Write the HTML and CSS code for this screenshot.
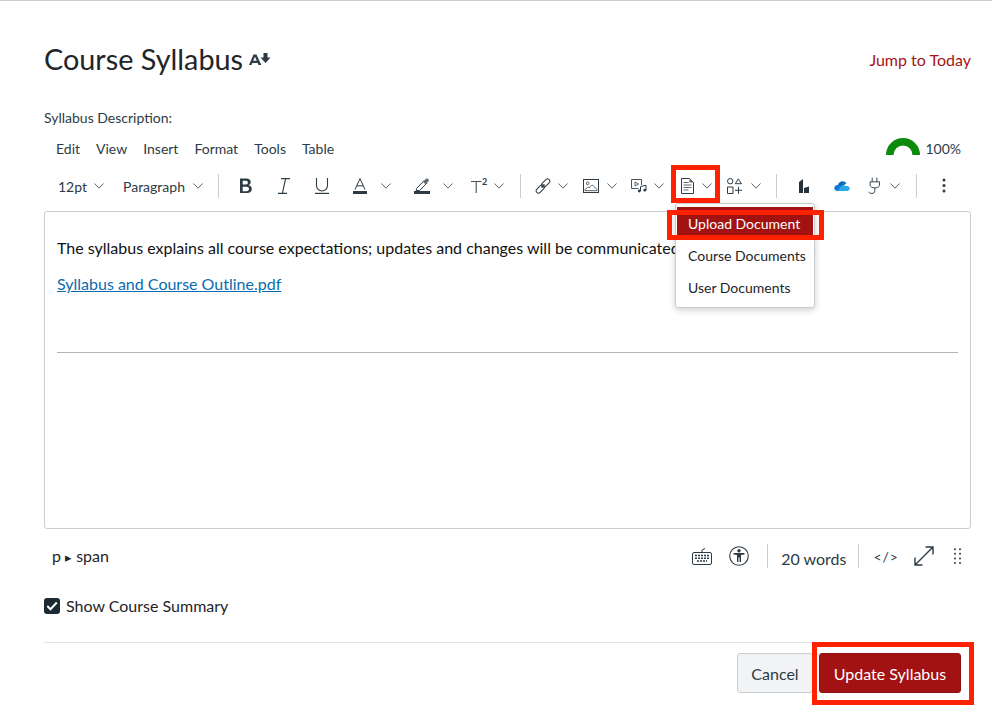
FILE: index.html
```html
<!DOCTYPE html>
<html lang="en">
<head>
<meta charset="utf-8">
<title>Course Syllabus</title>
<link rel="stylesheet" href="styles.css">
</head>
<body>
<svg class="defs" width="0" height="0" aria-hidden="true">
  <symbol id="chev" viewBox="0 0 10 6"><path d="M.5.5 5 5.200 9.500.5" fill="none" stroke="#5b6770" stroke-width="1"/></symbol>
</svg>
<main class="page">
  <header class="head">
    <div class="title-wrap">
      <h1 class="title">Course Syllabus</h1>
      <svg class="a11y-sort" width="22" height="12" viewBox="0 0 22 12"><path d="M4.500 1.500h3L12.300 12H9.500l-.8-2H3.300l-.8 2H0zM4.200 7.800h3.600L6 3.800z" fill="#2d3b45"/><path d="M14.500 0h4v4.500H21.500L16.500 10l-5-5.500h3z" fill="#2d3b45"/></svg>
    </div>
    <a class="jump" href="#">Jump to Today</a>
  </header>
  <div class="label">Syllabus Description:</div>
  <div class="menubar">
    <nav class="menus"><span>Edit</span><span>View</span><span>Insert</span><span>Format</span><span>Tools</span><span>Table</span></nav>
    <div class="score">
      <svg width="36" height="18" viewBox="0 0 36 18"><path d="M4.750 18a13.250 13.250 0 0 1 26.500 0" fill="none" stroke="#0b8a0b" stroke-width="7.500"/></svg>
      <span>100%</span>
    </div>
  </div>
  <div class="toolbar">
    <button class="tb t-size"><span>12pt</span><svg class="chev"><use href="#chev"/></svg></button>
    <button class="tb t-para"><span>Paragraph</span><svg class="chev"><use href="#chev"/></svg></button>
    <i class="sep"></i>
    <button class="tb t-bold"><svg width="14" height="16" viewBox="0 0 14 16"><path d="M1 .5h6.300c2.800 0 4.400 1.400 4.400 3.600 0 1.500-.8 2.600-2 3.100 1.800.4 3.100 1.700 3.100 3.700 0 2.600-1.900 4.100-4.700 4.100H1zM3.700 2.800v3.700h3.200c1.200 0 2-.7 2-1.900 0-1.100-.8-1.800-2-1.800zM3.700 8.800v4.400h3.800c1.500 0 2.500-.8 2.500-2.200 0-1.400-1-2.200-2.500-2.200z" fill="#2d3b45"/></svg></button>
    <button class="tb t-ital"><svg width="12" height="16" viewBox="0 0 12 16"><path d="M3 .6h9M0 15.400h9M7.600.6 4.400 15.400" fill="none" stroke="#2d3b45" stroke-width="1.100"/></svg></button>
    <button class="tb t-under"><svg width="14" height="16" viewBox="0 0 14 16"><path d="M1.500 0v7.500a5.500 5.500 0 0 0 11 0V0" fill="none" stroke="#2d3b45" stroke-width="1.100"/><path d="M0 15.400h14" stroke="#2d3b45" stroke-width="1.200"/></svg></button>
    <button class="tb t-color"><svg width="14" height="16" viewBox="0 0 14 16"><path d="M2 11.500 7 .6l5 10.900M3.700 7.800h6.600" fill="none" stroke="#2d3b45" stroke-width="1"/><path d="M0 13h14v3H0z" fill="#2d3b45"/></svg><svg class="chev"><use href="#chev"/></svg></button>
    <button class="tb t-mark"><svg width="16" height="16" viewBox="0 0 16 16"><path d="M2.500 10.500 10 2.800l2.600 2.600-7 7.100H2.200z" fill="none" stroke="#2d3b45"/><path d="M9 3.800 12 .7c.6-.4 1.300-.4 1.800 0l.8.9c.4.6.4 1.200 0 1.700l-3 3z" fill="#5f6b74"/><path d="M0 13h16v3H0z" fill="#2d3b45"/></svg><svg class="chev"><use href="#chev"/></svg></button>
    <button class="tb t-sup"><svg class="supicon" width="16" height="15" viewBox="0 0 16 15"><path d="M0 3.500h10.500M5.200 3.500V15" fill="none" stroke="#46535c" stroke-width="1.100"/><text x="11" y="7" class="sup">2</text></svg><svg class="chev"><use href="#chev"/></svg></button>
    <i class="sep"></i>
    <button class="tb t-link"><svg width="16" height="16" viewBox="0 0 16 16"><g fill="none" stroke="#2d3b45" stroke-width="1"><rect x="6" y="2.700" width="9.500" height="4.600" rx="2.300" transform="rotate(-45 10.750 5)"/><rect x=".5" y="8.700" width="9.500" height="4.600" rx="2.300" transform="rotate(-45 5.250 11)"/><path d="m6.500 9.500 3-3" stroke-width="1.600"/></g></svg><svg class="chev"><use href="#chev"/></svg></button>
    <button class="tb t-image"><svg width="16" height="14" viewBox="0 0 16 14"><rect x=".5" y=".5" width="15" height="13" fill="none" stroke="#2d3b45"/><circle cx="4.600" cy="4.300" r="1.300" fill="none" stroke="#2d3b45" stroke-width=".8"/><path d="M2 10.500c2-2.200 3-2.700 4.500-1.700 1.500-2.700 3-3 4-1.700l3.500 3.400v1.200H2z" fill="none" stroke="#2d3b45" stroke-width=".8"/></svg><svg class="chev"><use href="#chev"/></svg></button>
    <button class="tb t-media"><svg width="16" height="14" viewBox="0 0 16 14"><path d="M7.500 9.500H.5V.5h10V6" fill="none" stroke="#46535c"/><path d="M4 3v4l3.500-2z" fill="none" stroke="#46535c" stroke-width=".9"/><path d="M9.500 12V7.500l5.500-1.200V11" fill="none" stroke="#2d3b45"/><circle cx="8.300" cy="12" r="1.400" fill="#2d3b45"/><circle cx="13.800" cy="11.200" r="1.400" fill="#2d3b45"/></svg><svg class="chev"><use href="#chev"/></svg></button>
    <button class="tb t-doc"><svg width="13" height="16" viewBox="0 0 13 16"><path d="M.5.5h8l4 4v11H.5z" fill="none" stroke="#2d3b45"/><path d="M2.500 4.500h5M2.500 7h8M2.500 9.500h8M2.500 12h5" stroke="#5f6b74" stroke-width="1.200"/><path d="M8.500.5v4h4z" fill="#5f6b74"/></svg><svg class="chev"><use href="#chev"/></svg></button>
    <button class="tb t-shape"><svg width="15" height="16" viewBox="0 0 15 16"><g fill="none" stroke="#2d3b45"><circle cx="3.200" cy="3.200" r="2.700"/><path d="M8.300 5.700 11.300.9l3.100 4.800zM.5 9h5.500v6.500H.5zM8 12.300h7M11.500 8.800v7"/></g></svg><svg class="chev"><use href="#chev"/></svg></button>
    <i class="sep"></i>
    <button class="tb t-lti"><svg width="10" height="14" viewBox="0 0 10 14"><path d="M0 3 4 0v14H0zM5 9l5-1.500V14H5z" fill="#26333c"/></svg></button>
    <button class="tb t-drive"><svg width="16" height="10" viewBox="0 0 17 11"><path d="M4 4.500C4.700 1.700 7 0 9.500.2c1.700.1 3 1 3.800 2.400L7 7.500z" fill="#0f6cbd"/><path d="M3.800 11C1.700 11 0 9.600 0 7.600 0 5.700 1.700 4.300 3.700 4.300c1 0 2.100.4 3 1.100l2.300 2z" fill="#0f78d4"/><path d="M3.800 11h10.300c1.600 0 2.900-1.200 2.900-2.700S15.700 5.500 14 5.500h-1l-3.700-1L6 7.500z" fill="#28a8ea"/></svg></button>
    <button class="tb t-plug"><svg width="14" height="18" viewBox="0 0 15 19"><g fill="none" stroke="#2d3b45"><path d="M4.500.5v4.500M9.500.5v4.500M2.300 5h10v3.500c0 1.800-2 3-5 3s-5-1.200-5-3zM7.300 11.500v3c0 2-1.200 3-3 3s-3.300-.8-3.800-1.500"/></g></svg><svg class="chev"><use href="#chev"/></svg></button>
    <i class="sep"></i>
    <button class="tb t-more"><svg width="4" height="15" viewBox="0 0 4 15"><circle cx="2" cy="2" r="1.500" fill="#2d3b45"/><circle cx="2" cy="7.500" r="1.500" fill="#2d3b45"/><circle cx="2" cy="13" r="1.500" fill="#2d3b45"/></svg></button>
  </div>
  <section class="editor">
    <p class="copy">The syllabus explains all course expectations; updates and changes will be communicated in class via Canvas.</p>
    <p class="file"><a href="#">Syllabus and Course Outline.pdf</a></p>
    <hr class="rule">
  </section>
  <div class="status">
    <div class="path">p <b>▸</b> span</div>
    <div class="status-tools">
      <svg class="kbd" width="20" height="18" viewBox="0 0 20 18"><path d="M10 5V3l3-1.500" fill="none" stroke="#2d3b45"/><rect x=".5" y="5.500" width="19" height="12" rx="1.500" fill="none" stroke="#2d3b45"/><path d="M3 8.500h14M3 11.200h14M5 14h10" stroke="#2d3b45" stroke-width="1.600" stroke-dasharray="2 1"/></svg>
      <svg class="acc" width="20" height="20" viewBox="0 0 20 20"><circle cx="10" cy="10" r="9.300" fill="none" stroke="#2d3b45" stroke-width="1.100"/><circle cx="10" cy="4.800" r="1.700" fill="#2d3b45"/><path d="M4.500 7h11v1.500l-3.500.6V16h-1.400v-4.500H9.400V16H8V9.100l-3.500-.6z" fill="#2d3b45"/></svg>
      <i class="vr vr-a"></i>
      <span class="words">20 words</span>
      <i class="vr vr-b"></i>
      <span class="code">&lt;/&gt;</span>
      <svg class="expand" width="20" height="20" viewBox="0 0 20 20"><path d="M1 19 19 1M11.500 1H19v7.500M1 11.500V19h7.500" fill="none" stroke="#2d3b45" stroke-width="1.400"/></svg>
      <svg class="grip" width="7" height="16" viewBox="0 0 7 16"><g fill="#2d3b45"><circle cx="1" cy="1.200" r="1"/><circle cx="6" cy="1.200" r="1"/><circle cx="1" cy="5.800" r="1"/><circle cx="6" cy="5.800" r="1"/><circle cx="1" cy="10.400" r="1"/><circle cx="6" cy="10.400" r="1"/><circle cx="1" cy="15" r="1"/><circle cx="6" cy="15" r="1"/></g></svg>
    </div>
  </div>
  <div class="summary">
    <span class="check"><svg width="12" height="10" viewBox="0 0 12 10"><path d="M1.300 5 4.500 8.200 10.800 1.500" fill="none" stroke="#fff" stroke-width="2"/></svg></span>
    <span>Show Course Summary</span>
  </div>
  <footer class="actions">
    <button class="btn cancel">Cancel</button>
    <button class="btn primary">Update Syllabus</button>
  </footer>

  <ul class="dropdown">
    <li class="active">Upload Document</li>
    <li>Course Documents</li>
    <li>User Documents</li>
  </ul>
  <i class="mark mark-doc"></i>
  <i class="mark mark-upload"></i>
  <i class="mark mark-update"></i>
</main>
</body>
</html>
```
FILE: styles.css
```css
* { box-sizing: border-box; }
html, body { margin: 0; padding: 0; background: #fff; }
body { font-family: Lato, "Open Sans", sans-serif; color: #2d3b45; width: 992px; height: 725px; overflow: hidden; }
.defs { position: absolute; }
.page { position: relative; height: 725px; border-top: 1px solid #c7cdd1; padding: 0 21px 0 44px; }

.head { display: flex; justify-content: space-between; align-items: center; height: 60px; margin-top: 28px; }
.title-wrap { display: flex; align-items: center; gap: 6px; }
.title { margin: 0; font-size: 28.800px; font-weight: 400; color: #1f2529; line-height: 60px; }
.jump { font-size: 16px; color: #a61414; text-decoration: none; }

.label { font-size: 14px; line-height: 20px; color: #2d3b45; margin-top: 19px; }

.menubar { display: flex; justify-content: space-between; align-items: flex-end; height: 30px; margin-top: 1px; }
.menus { display: flex; gap: 16px; padding: 0 0 1px 12px; font-size: 14px; line-height: 18px; }
.score { display: flex; align-items: center; gap: 4px; padding-right: 10px; font-size: 14px; color: #2d3b45; }
.score svg { display: block; margin-bottom: 4px; }

.toolbar { display: flex; align-items: center; height: 37px; margin-top: 8px; padding-left: 14px; }
.tb { display: flex; align-items: center; height: 30px; padding: 0; border: 0; background: none; font: inherit; font-size: 14px; color: #2d3b45; flex: none; }
.tb span { margin-top: 2px; }
.tb svg { flex: none; }
.chev { width: 10px; height: 6px; }
.sep { display: block; width: 1px; height: 24px; background: #c7cdd1; flex: none; }
.t-size { width: 65px; gap: 7px; }
.t-para { width: 95px; gap: 8px; }
.t-bold { width: 59px; padding-left: 20px; }
.t-ital { width: 37px; }
.t-under { width: 38px; }
.t-color { width: 61px; gap: 14px; }
.t-mark { width: 57px; gap: 13px; }
.t-sup { width: 49px; gap: 7px; }
.t-link { width: 62px; padding-left: 14px; gap: 7px; }
.t-image { width: 48px; gap: 8px; }
.t-media { width: 50px; gap: 7px; }
.t-doc { width: 46px; gap: 8px; }
.t-shape { width: 49px; gap: 9px; }
.t-lti { width: 57px; padding-left: 22px; }
.t-drive { width: 34px; }
.t-plug { width: 48px; gap: 8px; }
.t-more { width: 40px; padding-left: 25px; }
.supicon { overflow: visible; }
.sup { font-family: Lato, sans-serif; font-size: 9px; font-weight: 700; fill: #2d3b45; }

.editor { height: 318px; margin-top: 7px; border: 1px solid #c7cdd1; border-radius: 3px; padding: 0 12px; color: #111; }
.copy { margin: 26px 0 0; font-size: 16px; line-height: 20px; white-space: nowrap; }
.file { margin: 16px 0 0; font-size: 16px; line-height: 20px; }
.file a { color: #0b6bae; }
.rule { margin: 58px 0 0; border: 0; border-top: 1px solid #b0b5b8; }

.status { display: flex; justify-content: space-between; align-items: center; height: 48px; margin-top: 3px; }
.path { padding-left: 8px; font-size: 16px; color: #1f2529; margin-top: -2px; }
.path b { font-size: 13px; font-weight: 400; }
.status-tools { display: flex; align-items: center; padding-right: 10px; }
.kbd { margin-right: 17px; }
.vr { display: block; width: 1px; height: 24px; background: #c7cdd1; }
.vr-a { margin-left: 18px; margin-right: 13px; }
.words { font-size: 16px; margin-right: 12px; margin-top: 5px; }
.vr-b { margin-right: 14px; }
.code { font-size: 14px; letter-spacing: 1px; margin-right: 15px; }
.expand { margin-right: 20px; }

.summary { display: flex; align-items: center; gap: 6px; margin-top: 16px; font-size: 16px; line-height: 20px; color: #1f2529; }
.check { display: flex; align-items: center; justify-content: center; width: 16px; height: 16px; background: #1c2a33; border-radius: 3px; }

.actions { display: flex; justify-content: flex-end; gap: 6px; margin-top: 26px; padding-top: 10px; padding-right: 10px; border-top: 1px solid #dfe3e5; }
.btn { height: 40px; border-radius: 3px; font: inherit; font-size: 16px; padding: 0; }
.cancel { width: 76px; background: #f2f3f4; border: 1px solid #c7cdd1; color: #2d3b45; }
.primary { width: 142px; background: #a31212; border: 1px solid #8f1010; color: #fff; }

.dropdown { position: absolute; left: 675px; top: 202px; width: 140px; height: 105px; margin: 0; padding: 3px 0 0; list-style: none; background: #fff; border: 1px solid #c7cdd1; border-radius: 3px; box-shadow: 0 2px 6px rgba(0,0,0,.2); font-size: 14px; color: #1f2529; }
.dropdown li { height: 32px; line-height: 32px; padding-left: 12px; white-space: nowrap; }
.dropdown li.active { background: #a31212; color: #fff; height: 33px; line-height: 34px; margin: 0 1px; padding-left: 11px; }

.mark { position: absolute; display: block; border: 5px solid #ff2200; }
.mark-doc { left: 671px; top: 164px; width: 49px; height: 38px; }
.mark-upload { left: 667px; top: 209px; width: 157px; height: 30px; }
.mark-update { left: 812px; top: 641px; width: 162px; height: 63px; }
```
